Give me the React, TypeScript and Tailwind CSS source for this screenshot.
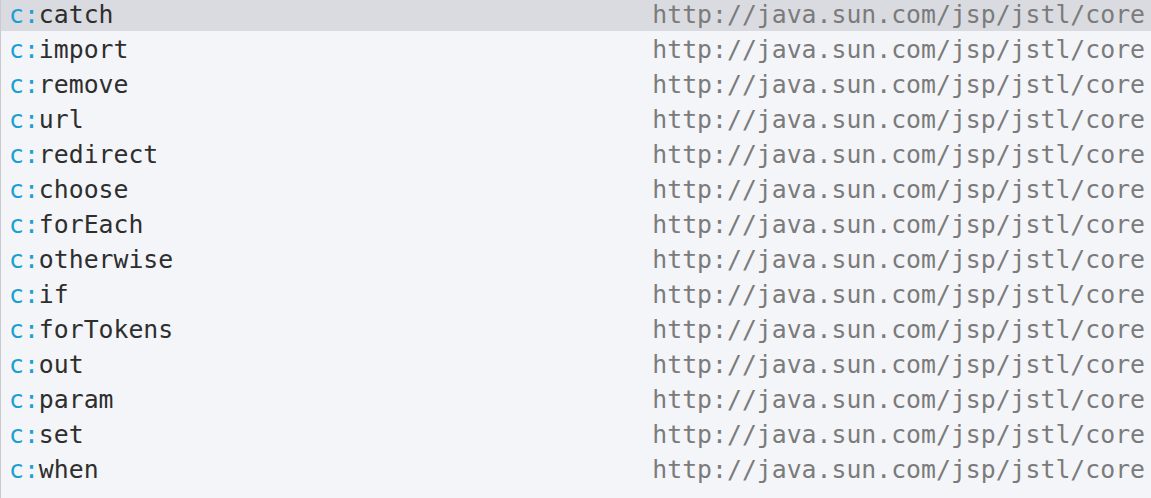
const tags = [
  'catch',
  'import',
  'remove',
  'url',
  'redirect',
  'choose',
  'forEach',
  'otherwise',
  'if',
  'forTokens',
  'out',
  'param',
  'set',
  'when',
];

const uri = 'http://java.sun.com/jsp/jstl/core';

export default function App() {
  return (
    <div className="h-[498px] w-[1151px] overflow-hidden bg-[#f4f5f9] border-l border-[#c9cbd0] font-['DejaVu_Sans_Mono',monospace] text-[24.8px]">
      <ul className="-mt-[4px] flex flex-col">
        {tags.map((tag, i) => (
          <li
            key={tag}
            className={`flex h-[35px] items-center justify-between pt-[4px] pl-[8px] pr-[6px] leading-none ${
              i === 0 ? 'bg-[#d9dbe0]' : ''
            }`}
          >
            <span className="whitespace-pre">
              <span className="text-[#1aa0d2]">c:</span>
              <span className="text-[#2e2e2e]">{tag}</span>
            </span>
            <span className="whitespace-pre text-[#7b7b7b]">{uri}</span>
          </li>
        ))}
      </ul>
    </div>
  );
}
